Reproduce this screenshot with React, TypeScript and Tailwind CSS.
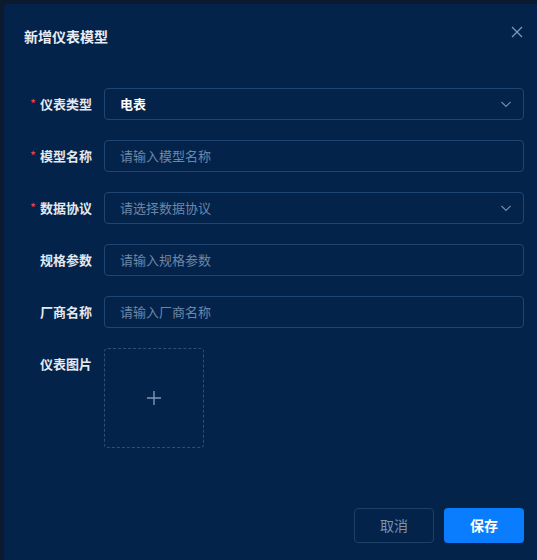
import React from 'react';

const font = "font-['Noto_Sans_CJK_SC','Noto_Sans',sans-serif]";

interface FieldProps {
  label: string;
  required?: boolean;
  children: React.ReactNode;
}

const Field: React.FC<FieldProps> = ({ label, required, children }) => (
  <div className="flex items-center h-[32px]">
    <div className="w-[100px] pr-[12px] flex justify-end items-center text-[13px] font-bold text-[#e3e9f2]">
      {required && <span className="text-[#e5484d] mr-[4px] text-[13px] font-normal">*</span>}
      <span>{label}</span>
    </div>
    <div className="flex-1">{children}</div>
  </div>
);

const Chevron = () => (
  <svg width="12" height="12" viewBox="0 0 12 12" fill="none" stroke="#6f8bb0" strokeWidth="1.2">
    <path d="M1.5 4L6 8.5L10.5 4" />
  </svg>
);

const SelectBox: React.FC<{ value?: string; placeholder?: string }> = ({ value, placeholder }) => (
  <div className="h-[32px] w-full rounded-[4px] border border-[#1f4672] flex items-center justify-between pl-[15px] pr-[11px]">
    {value ? (
      <span className="text-[13px] font-semibold text-white">{value}</span>
    ) : (
      <span className="text-[13px] text-[#6d86a8]">{placeholder}</span>
    )}
    <Chevron />
  </div>
);

const TextBox: React.FC<{ placeholder: string }> = ({ placeholder }) => (
  <div className="h-[32px] w-full rounded-[4px] border border-[#1f4672] flex items-center pl-[15px]">
    <span className="text-[13px] text-[#6d86a8]">{placeholder}</span>
  </div>
);

export default function App() {
  return (
    <div className={`w-[537px] h-[560px] bg-[#0b1a2f] flex pl-[4px] pt-[4px] overflow-hidden ${font}`}>
      <div className="flex-1 bg-[#04234a] rounded-tl-[4px] flex flex-col">
        <div className="flex items-center justify-between pl-[20px] pr-[14px] pt-[22px] h-[42px]">
          <span className="text-[14px] font-bold text-[#e8edf5] leading-[20px]">新增仪表模型</span>
          <svg width="12" height="12" viewBox="0 0 12 12" stroke="#7d98bd" strokeWidth="1.3" className="mt-[-8px]">
            <path d="M1 1L11 11M11 1L1 11" />
          </svg>
        </div>

        <div className="flex flex-col gap-[20px] mt-[42px] pr-[13px]">
          <Field label="仪表类型" required>
            <SelectBox value="电表" />
          </Field>
          <Field label="模型名称" required>
            <TextBox placeholder="请输入模型名称" />
          </Field>
          <Field label="数据协议" required>
            <SelectBox placeholder="请选择数据协议" />
          </Field>
          <Field label="规格参数">
            <TextBox placeholder="请输入规格参数" />
          </Field>
          <Field label="厂商名称">
            <TextBox placeholder="请输入厂商名称" />
          </Field>
          <div className="flex">
            <div className="w-[100px] pr-[12px] text-right text-[13px] font-bold text-[#e3e9f2] leading-[32px]">
              仪表图片
            </div>
            <div className="w-[100px] h-[100px] rounded-[4px] border border-dashed border-[#2c5078] flex items-center justify-center">
              <svg width="14" height="14" viewBox="0 0 14 14" stroke="#8197b5" strokeWidth="1.4">
                <path d="M7 0V14M0 7H14" />
              </svg>
            </div>
          </div>
        </div>

        <div className="mt-auto mb-[17px] flex justify-end gap-[10px] pr-[13px]">
          <button className="w-[80px] h-[35px] rounded-[4px] border border-[#1e3f66] text-[14px] text-[#7f93ae]">
            取消
          </button>
          <button className="w-[80px] h-[35px] rounded-[4px] bg-[#0a7dff] text-[14px] font-bold text-white">
            保存
          </button>
        </div>
      </div>
    </div>
  );
}
